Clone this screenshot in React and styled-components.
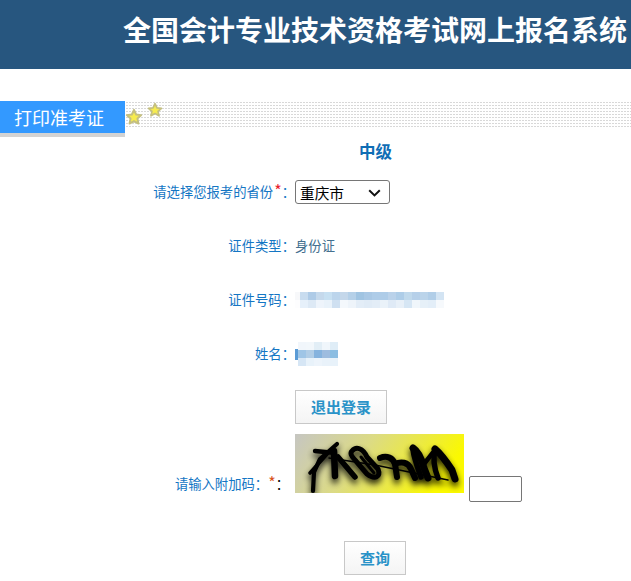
import React from 'react';
import styled, { createGlobalStyle } from 'styled-components';

const GlobalStyle = createGlobalStyle`
  html, body {
    margin: 0;
    padding: 0;
    background: #fff;
    font-family: "Noto Sans CJK SC", "Liberation Sans", sans-serif;
  }
`;

const COLON = '\uFF1A';

const Header = styled.header`
  height: 69px;
  box-sizing: border-box;
  padding: 9px 0 0 123px;
  background: #27567f;
  color: #fff;
  font-size: 28px;
  font-weight: 700;
  line-height: 40px;
  white-space: nowrap;
  overflow: hidden;
`;

const SectionBar = styled.div`
  display: flex;
  margin-top: 32px;
  height: 36px;
`;

const Tab = styled.div`
  width: 125px;
  height: 36px;
  box-sizing: border-box;
  padding-left: 14px;
  background: #3399ff;
  border-bottom: 4px solid #d3d3d3;
  color: #fff;
  font-size: 18px;
  line-height: 32px;
`;

const Dots = styled.div`
  flex: 1;
  height: 26px;
  margin-top: 1px;
  display: flex;
  align-items: flex-start;
  background:
    linear-gradient(90deg, #fff 50%, transparent 50%) 0 0 / 3px 3px,
    linear-gradient(#d8d8d8 50%, #fff 50%) 0 0 / 3px 3px;
`;

const Star = styled.svg`
  display: block;
  flex: none;
  margin-left: ${p => p.$left}px;
  margin-top: ${p => p.$top}px;
`;

const Level = styled.h2`
  margin: 0;
  height: 28px;
  padding-left: 359px;
  color: #0f6db5;
  font-size: 16.5px;
  font-weight: 700;
  line-height: 28px;
`;

const Row = styled.div`
  display: grid;
  grid-template-columns: 295px auto;
  align-items: ${p => p.$align || 'center'};
  height: ${p => p.$height}px;
  margin-top: ${p => p.$top || 0}px;
`;

const Label = styled.div`
  box-sizing: border-box;
  text-align: right;
  text-spacing-trim: space-all;
  color: #1476c4;
  font-size: 13.33px;
  line-height: 20px;
  white-space: nowrap;
  padding-bottom: ${p => p.$bottom || 1}px;
  padding-right: ${p => p.$right || 0}px;
`;

const Required = styled.span`
  margin-left: ${p => p.$left || 0}px;
  color: ${p => p.$color || '#e8202a'};
  font-size: 16px;
  line-height: 1;
`;

const Colon = styled.span`
  color: #000;
`;

const Value = styled.div`
  color: #44708f;
  font-size: 13.33px;
  line-height: 20px;
`;

const SelectWrap = styled.div`
  position: relative;
  width: 95px;
  height: 24px;
`;

const ProvinceSelect = styled.select`
  display: block;
  appearance: none;
  width: 95px;
  height: 24px;
  box-sizing: border-box;
  padding: 0 0 0 4px;
  border: 1px solid #767676;
  border-radius: 3px;
  background: #fff;
  color: #000;
  font-family: inherit;
  font-size: 14.67px;
`;

const Chevron = styled.svg`
  position: absolute;
  left: 73px;
  top: 9px;
  pointer-events: none;
`;

const Button = styled.button`
  display: block;
  height: 34px;
  width: ${p => p.$width}px;
  box-sizing: border-box;
  padding: 0 0 2px;
  border: 1px solid #c8c8c8;
  background: linear-gradient(#ffffff, #f4f4f4);
  color: #2a93c8;
  font-family: inherit;
  font-size: 15px;
  font-weight: 700;
`;

const CaptchaRow = styled.div`
  display: flex;
  align-items: flex-end;
  column-gap: 5px;
`;

const Captcha = styled.svg`
  display: block;
  margin-bottom: 9px;
`;

const CaptchaInput = styled.input`
  display: block;
  width: 53px;
  height: 26px;
  box-sizing: border-box;
  border: 1px solid #767676;
  border-radius: 2px;
  background: #fff;
`;

const QueryRow = styled.div`
  margin-top: 39px;
  padding-left: 344px;
`;

const Mosaic = styled.svg`
  display: block;
`;

const idCells = [
  ['f7f8fa', 'c8dcef', 'aecbe7', 'c5d9ec', 'c7e0f2', 'bcd5ec', 'c4d7ea', 'b5d0e8', 'a0c4e2', 'a9c8e5', 'aecce8', 'aecce8', 'bad2ea', 'aecde8', 'c0d9ec', 'b6d0e9', 'bbd4ea', 'b1cee8', 'd3e4f3'],
  ['fdfdfe', 'e6f0fa', 'dde9f5', 'eef4fb', 'e9f2fa', 'cfe0f1', 'f4f8fc', 'eef4fa', 'e3edf7', 'e0ebf6', 'e3edf7', 'eaf2f9', 'dfeaf6', 'e8f0f8', 'd6e6f4', 'f0f6fb', 'e6f0f8', 'e3eef8', 'f6f9fc'],
];

const nameCells = [
  ['f1f6fb', 'f2f7fb', 'e2eef6', 'f0f6fb', 'dfedf7'],
  ['9fc5e6', 'b1cde6', '86b3de', '9ebcdf', '8bbde2'],
  ['d6e6f5', 'e8f2fa', 'edf4fb', 'e9f2fa', 'e8f2fa'],
];

const MosaicBlock = ({ cells, width, height, offset, children }) => (
  <Mosaic width={width} height={height} viewBox={`0 0 ${width} ${height}`}>
    {children}
    {cells.map((row, y) =>
      row.map((c, x) => (
        <rect key={`${x}-${y}`} x={offset + x * 8} y={y * 8} width="8" height="8" fill={`#${c}`} />
      ))
    )}
  </Mosaic>
);

const StarIcon = ({ size, left, top }) => (
  <Star $left={left} $top={top} width={size} height={size} viewBox="0 0 24 24">
    <path
      d="M12 2.5l2.9 6.2 6.7.8-5 4.6 1.4 6.7L12 17.4l-6 3.4 1.4-6.7-5-4.6 6.7-.8z"
      fill="#f7ec4e"
      stroke="#c4bf80"
      strokeWidth="2.6"
      strokeLinejoin="round"
    />
  </Star>
);

const captchaStrokes = (
  <g fill="none" stroke="#060604" strokeLinecap="round" strokeLinejoin="round">
    <path strokeWidth="4.2" d="M18 57 L19 38 L25 25 L42 10" />
    <path strokeWidth="4.4" d="M20 17 L40 19" />
    <path strokeWidth="3.6" d="M15 39 L33 19" />
    <path strokeWidth="6.5" d="M39 17 L40 42" />
    <path strokeWidth="5.5" d="M43 23 L60 43" />
    <path strokeWidth="1.5" d="M34 24 L80 31 L153 46" />
    <path strokeWidth="5" d="M57 17 C61 12 68 14 72 23 L83 35 C86 43 80 46 72 40 L60 26 C56 22 55 19 57 17" />
    <path strokeWidth="3" d="M66 23 L79 39" />
    <path strokeWidth="6" d="M85 24 C92 21 98 24 100 30 L102 43" />
    <path strokeWidth="6" d="M100 30 C106 27 113 28 116 35 L120 44" />
    <path strokeWidth="7" d="M118 14 C124 18 127 26 129 34 L133 44" />
    <path strokeWidth="5.5" d="M118 16 C119 24 122 32 126 43" />
    <path strokeWidth="4.5" d="M129 30 L140 16" />
    <path strokeWidth="7" d="M140 15 C146 20 153 30 157 36 L160 45" />
    <path strokeWidth="5.5" d="M140 16 C138 24 139 34 143 44" />
  </g>
);

const CaptchaImage = () => (
  <Captcha width="169" height="59" viewBox="0 0 169 59">
    <defs>
      <linearGradient id="captchaBg" x1="0" y1="0" x2="1" y2="0.25">
        <stop offset="0" stopColor="#c6c6c2" />
        <stop offset="0.45" stopColor="#dcdb84" />
        <stop offset="0.75" stopColor="#ecea40" />
        <stop offset="1" stopColor="#fbf900" />
      </linearGradient>
      <filter id="captchaShadow" x="-10%" y="-30%" width="120%" height="170%">
        <feGaussianBlur stdDeviation="3" />
      </filter>
      <filter id="captchaSoft" x="-5%" y="-5%" width="110%" height="110%">
        <feGaussianBlur stdDeviation="0.5" />
      </filter>
    </defs>
    <rect width="169" height="59" fill="url(#captchaBg)" />
    <g filter="url(#captchaShadow)" opacity="0.9" transform="translate(0 4)">{captchaStrokes}</g>
    <g filter="url(#captchaSoft)">{captchaStrokes}</g>
  </Captcha>
);

const App = () => (
  <>
    <GlobalStyle />
    <Header>全国会计专业技术资格考试网上报名系统</Header>
    <SectionBar>
      <Tab>打印准考证</Tab>
      <Dots>
        <StarIcon size={18} left={0} top={6} />
        <StarIcon size={16} left={4} top={0} />
      </Dots>
    </SectionBar>
    <Level>中级</Level>
    <Row $height={54}>
      <Label>请选择您报考的省份<Required $left={1}>*</Required>{COLON}</Label>
      <Value>
        <SelectWrap>
          <ProvinceSelect defaultValue="重庆市">
            <option>重庆市</option>
          </ProvinceSelect>
          <Chevron width="13" height="8" viewBox="0 0 13 8">
            <path d="M1.2 1.2 L6.5 6.4 L11.8 1.2" fill="none" stroke="#111" strokeWidth="2" />
          </Chevron>
        </SelectWrap>
      </Value>
    </Row>
    <Row $height={54}>
      <Label>证件类型{COLON}</Label>
      <Value>身份证</Value>
    </Row>
    <Row $height={54}>
      <Label>证件号码{COLON}</Label>
      <Value>
        <MosaicBlock cells={idCells} width={149} height={16} offset={-3} />
      </Value>
    </Row>
    <Row $height={54}>
      <Label>姓名{COLON}</Label>
      <Value>
        <MosaicBlock cells={nameCells} width={43} height={24} offset={3}>
          <rect x="0" y="7" width="3" height="11" fill="#5b9bd5" />
        </MosaicBlock>
      </Value>
    </Row>
    <Row $height={34} $top={9}>
      <span />
      <Button $width={92}>退出登录</Button>
    </Row>
    <Row $height={68} $top={10} $align="end">
      <Label $bottom={8} $right={6}>
        请输入附加码{COLON}<Required $color="#d9541e">*</Required><Colon>{COLON}</Colon>
      </Label>
      <CaptchaRow>
        <CaptchaImage />
        <CaptchaInput type="text" />
      </CaptchaRow>
    </Row>
    <QueryRow>
      <Button $width={62}>查询</Button>
    </QueryRow>
  </>
);

export default App;
